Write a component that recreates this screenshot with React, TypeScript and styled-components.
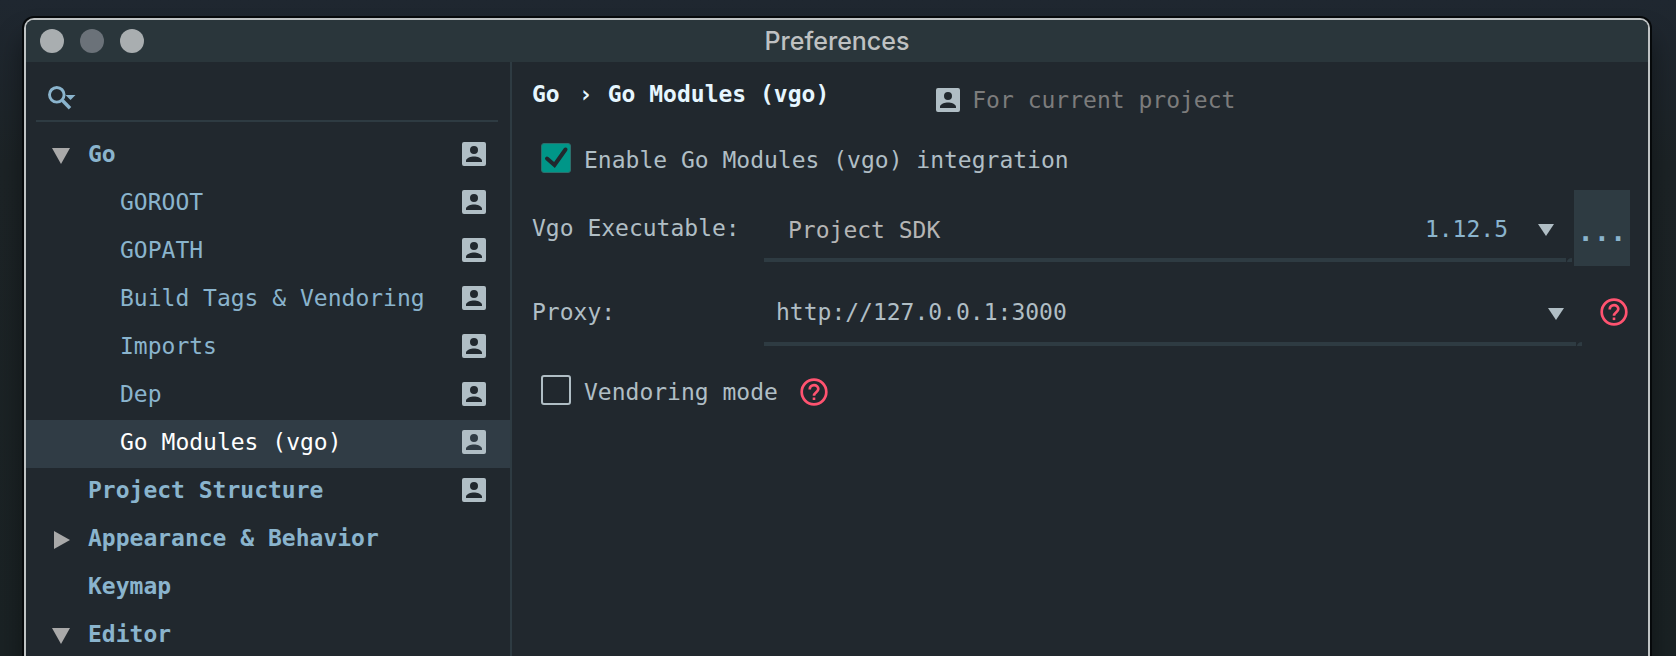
import React, { useState } from "react";
import styled, { createGlobalStyle } from "styled-components";

const c = {
  bg: "#21282e",
  title: "#2a363b",
  line: "#2e3b42",
  selected: "#303c45",
  text: "#b0bec5",
  blue: "#8ab4cd",
  grey: "#a9a9a9",
  teal: "#009688",
  pink: "#ff5370",
};

const Global = createGlobalStyle`
  * { box-sizing: border-box; }
  body {
    margin: 0;
    font: 23px/28px "DejaVu Sans Mono", "Liberation Mono", monospace;
    color: ${c.text};
    background: #1b2326;
  }
  button, input, select { font: inherit; color: inherit; }
`;

const Desktop = styled.div`
  height: 100vh;
  overflow: hidden;
  display: flex;
  padding: 18px 26px 0 24px;
  background: linear-gradient(#1f2730, #1c2326 25%, #1a2224);
`;

const Window = styled.section`
  flex: 1;
  min-width: 0;
  display: flex;
  flex-direction: column;
  border: 2px solid #bfc3c4;
  border-bottom: 0;
  border-radius: 10px 10px 0 0;
  background: ${c.bg};
  box-shadow: 0 0 0 2px #06090b, 0 20px 26px 2px rgba(0, 0, 0, 0.4);
  overflow: hidden;
`;

const TitleBar = styled.header`
  flex: none;
  display: grid;
  grid-template-columns: 1fr auto 1fr;
  align-items: center;
  height: 42px;
  padding: 0 14px;
  background: ${c.title};
`;

const Lights = styled.div`
  display: flex;
  gap: 16px;
`;

const Light = styled.button<{ $dim?: boolean }>`
  width: 24px;
  height: 24px;
  padding: 0;
  border: 0;
  border-radius: 50%;
  background: ${(p) => (p.$dim ? "#6b7279" : "#a9aeb0")};
`;

const Title = styled.h1`
  margin: 0;
  font: 500 25px/40px Inter, "Liberation Sans", sans-serif;
  color: #bfc1c2;
`;

const Body = styled.div`
  flex: 1;
  min-height: 0;
  display: grid;
  grid-template-columns: 486px minmax(0, 1fr);
`;

const Sidebar = styled.aside`
  border-right: 2px solid ${c.line};
`;

const SearchBox = styled.label`
  display: flex;
  align-items: center;
  gap: 8px;
  height: 60px;
  margin: 0 12px 10px 10px;
  padding: 14px 12px 0;
  border-bottom: 2px solid ${c.line};
`;

const SearchInput = styled.input`
  flex: 1;
  min-width: 0;
  border: 0;
  outline: 0;
  background: transparent;
`;

const Tree = styled.ul`
  margin: 0;
  padding: 0;
  list-style: none;
`;

const TreeRow = styled.li<{ $selected?: boolean; $bold?: boolean }>`
  display: flex;
  align-items: center;
  height: 48px;
  padding: 0 24px 4px 26px;
  font-weight: ${(p) => (p.$bold ? 700 : 400)};
  color: ${(p) => (p.$selected ? "#ffffff" : c.blue)};
  background: ${(p) => (p.$selected ? c.selected : "transparent")};
`;

const Twisty = styled.span<{ $child?: boolean }>`
  flex: none;
  display: flex;
  width: ${(p) => (p.$child ? 68 : 36)}px;
  padding-top: 4px;
`;

const RowLabel = styled.span`
  flex: 1;
  white-space: nowrap;
`;

const Main = styled.main`
  padding: 18px 18px 0 20px;
`;

const Heading = styled.div`
  display: flex;
  align-items: flex-start;
  gap: 107px;
  height: 64px;
`;

const Crumbs = styled.h2`
  display: flex;
  margin: 0;
  font-size: 23px;
  line-height: 28px;
  color: #e6f6ff;
  white-space: pre;
`;

const Separator = styled.span`
  width: 48px;
  padding-left: 4px;
  text-align: center;
`;

const Scope = styled.div`
  display: flex;
  align-items: center;
  gap: 12px;
  padding-top: 6px;
  color: #7c7c7c;
`;

const CheckRow = styled.div`
  display: flex;
  align-items: center;
  gap: 22px;
  height: 32px;
  padding-left: 9px;
`;

const CheckLabel = styled.label`
  display: flex;
  align-items: center;
  gap: 13px;
`;

const BoxCell = styled.span`
  display: grid;
  padding-bottom: 4px;
  > * { grid-area: 1 / 1; }
  > svg { pointer-events: none; }
`;

const CheckBox = styled.input`
  appearance: none;
  width: 30px;
  height: 30px;
  margin: 0;
  border: 2px solid ${c.text};
  border-radius: 3px;
  &:checked {
    border: 1px solid #2c6f6c;
    background: ${c.teal};
  }
`;

const Form = styled.div`
  display: grid;
  grid-template-columns: 232px minmax(0, 1fr);
  margin: 14px 0 18px;
  align-items: start;
`;

const FieldLabel = styled.label`
  padding-top: 24px;
`;

const Field = styled.div<{ $gap: number }>`
  display: flex;
  align-items: flex-start;
  gap: ${(p) => p.$gap}px;
  height: 84px;
`;

const Combo = styled.div`
  flex: 1;
  min-width: 0;
`;

const ComboBody = styled.div`
  display: grid;
  grid-template-columns: minmax(0, 1fr) auto auto;
  align-items: center;
  column-gap: 30px;
  height: 68px;
  padding: 12px 18px 0 0;
`;

const Select = styled.select`
  grid-area: 1 / 1 / 2 / -1;
  appearance: none;
  height: 40px;
  padding: 0 0 0 24px;
  border: 0;
  outline: 0;
  background: transparent;
  color: #b5b5b5;
`;

const Version = styled.span`
  grid-area: 1 / 2;
  padding-bottom: 2px;
  color: ${c.blue};
  pointer-events: none;
`;

const SelectArrow = styled.span`
  grid-area: 1 / 3;
  display: flex;
  pointer-events: none;
`;

const TextInput = styled.input`
  grid-area: 1 / 1 / 2 / 3;
  min-width: 0;
  height: 40px;
  padding: 0 0 4px 12px;
  border: 0;
  outline: 0;
  background: transparent;
`;

const PlainButton = styled.button`
  display: flex;
  padding: 0;
  border: 0;
  background: transparent;
`;

const Underline = styled.div`
  display: flex;
  height: 4px;
  &::before {
    content: "";
    flex: 1;
    background: ${c.line};
  }
`;

const MoreButton = styled.button`
  width: 56px;
  height: 76px;
  padding: 8px 0 0;
  border: 0;
  background: ${c.line};
  color: ${c.blue};
  font-size: 27px;
  font-weight: 700;
  text-align: center;
`;

const HelpCell = styled.div`
  padding: 24px 2px 0 0;
`;

const Person = () => (
  <svg width="24" height="24" viewBox="0 0 24 24" aria-hidden="true">
    <path
      fill={c.text}
      fillRule="evenodd"
      d="M2 0h20a2 2 0 0 1 2 2v20a2 2 0 0 1-2 2H2a2 2 0 0 1-2-2V2a2 2 0 0 1 2-2ZM12 4a4 4 0 1 0 0 8 4 4 0 0 0 0-8ZM4 20h16v-1.300c0-2.700-5-4.200-8-4.200s-8 1.500-8 4.200Z"
    />
  </svg>
);

const Caret = ({ open }: { open: boolean }) => (
  <svg width="20" height="18" viewBox="0 0 20 18" aria-hidden="true">
    <path fill={c.grey} d={open ? "M0 1h18L9 17Z" : "M2 0v18l16-9Z"} />
  </svg>
);

const DropArrow = () => (
  <svg width="16" height="12" viewBox="0 0 16 12" aria-hidden="true">
    <path fill={c.text} d="M0 0h16L8 12Z" />
  </svg>
);

const Notch = () => (
  <svg width="6" height="4" viewBox="0 0 6 4" aria-hidden="true">
    <path fill={c.line} d="M6 0v4H1C1 2 3 0 6 0Z" />
  </svg>
);

const SearchIcon = () => (
  <svg width="30" height="24" viewBox="0 0 30 24" fill="none" aria-hidden="true">
    <circle cx="8.800" cy="8.800" r="7.300" stroke={c.blue} strokeWidth="2.900" />
    <path d="M14.500 14.500 22 22.300" stroke={c.blue} strokeWidth="3.400" />
    <path d="M17.500 9h10L22.500 14Z" fill={c.blue} />
  </svg>
);

const Help = () => (
  <svg width="28" height="28" viewBox="0 0 28 28" fill="none" aria-hidden="true">
    <circle cx="14" cy="14" r="12.300" stroke={c.pink} strokeWidth="2.700" />
    <path d="M9.700 11.400c0-2.500 1.900-4.300 4.300-4.300s4.300 1.700 4.300 4c0 3-4.300 3.400-4.300 6.700" stroke={c.pink} strokeWidth="2.700" />
    <path d="M12.700 19.500h2.600v2.600h-2.600z" fill={c.pink} />
  </svg>
);

type Item = { label: string; level: 0 | 1; project?: boolean; open?: boolean; selected?: boolean };

const items: Item[] = [
  { label: "Go", level: 0, project: true, open: true },
  { label: "GOROOT", level: 1, project: true },
  { label: "GOPATH", level: 1, project: true },
  { label: "Build Tags & Vendoring", level: 1, project: true },
  { label: "Imports", level: 1, project: true },
  { label: "Dep", level: 1, project: true },
  { label: "Go Modules (vgo)", level: 1, project: true, selected: true },
  { label: "Project Structure", level: 0, project: true },
  { label: "Appearance & Behavior", level: 0, open: false },
  { label: "Keymap", level: 0 },
  { label: "Editor", level: 0, open: true },
];

export default function App() {
  const [enabled, setEnabled] = useState(true);
  const [vendoring, setVendoring] = useState(false);
  const [proxy, setProxy] = useState("http://127.0.0.1:3000");

  return (
    <Desktop>
      <Global />
      <Window>
        <TitleBar>
          <Lights>
            <Light aria-label="Close" />
            <Light $dim aria-label="Minimize" />
            <Light aria-label="Zoom" />
          </Lights>
          <Title>Preferences</Title>
        </TitleBar>
        <Body>
          <Sidebar>
            <SearchBox>
              <SearchIcon />
              <SearchInput type="search" aria-label="Search settings" />
            </SearchBox>
            <Tree>
              {items.map((item) => (
                <TreeRow key={item.label} $bold={item.level === 0} $selected={item.selected}>
                  <Twisty $child={item.level === 1}>
                    {item.open !== undefined && <Caret open={item.open} />}
                  </Twisty>
                  <RowLabel>{item.label}</RowLabel>
                  {item.project && <Person />}
                </TreeRow>
              ))}
            </Tree>
          </Sidebar>
          <Main>
            <Heading>
              <Crumbs>
                <span>Go</span>
                <Separator>›</Separator>
                <span>Go Modules (vgo)</span>
              </Crumbs>
              <Scope>
                <Person />
                <span>For current project</span>
              </Scope>
            </Heading>
            <CheckRow>
              <CheckLabel>
                <BoxCell>
                  <CheckBox type="checkbox" checked={enabled} onChange={(e) => setEnabled(e.target.checked)} />
                  {enabled && (
                    <svg width="30" height="30" viewBox="0 0 30 30" fill="none" aria-hidden="true">
                      <path d="M6 15.500 13.500 22 24.500 6.500" stroke={c.bg} strokeWidth="4" strokeLinecap="round" />
                    </svg>
                  )}
                </BoxCell>
                Enable Go Modules (vgo) integration
              </CheckLabel>
            </CheckRow>
            <Form>
              <FieldLabel htmlFor="vgo">Vgo Executable:</FieldLabel>
              <Field $gap={2}>
                <Combo>
                  <ComboBody>
                    <Select id="vgo">
                      <option>Project SDK</option>
                    </Select>
                    <Version>1.12.5</Version>
                    <SelectArrow>
                      <DropArrow />
                    </SelectArrow>
                  </ComboBody>
                  <Underline>
                    <Notch />
                  </Underline>
                </Combo>
                <MoreButton aria-label="Browse">...</MoreButton>
              </Field>
              <FieldLabel htmlFor="proxy">Proxy:</FieldLabel>
              <Field $gap={18}>
                <Combo>
                  <ComboBody>
                    <TextInput id="proxy" value={proxy} onChange={(e) => setProxy(e.target.value)} />
                    <PlainButton aria-label="Show proxies">
                      <DropArrow />
                    </PlainButton>
                  </ComboBody>
                  <Underline>
                    <Notch />
                  </Underline>
                </Combo>
                <HelpCell>
                  <PlainButton aria-label="Proxy help">
                    <Help />
                  </PlainButton>
                </HelpCell>
              </Field>
            </Form>
            <CheckRow>
              <CheckLabel>
                <BoxCell>
                  <CheckBox type="checkbox" checked={vendoring} onChange={(e) => setVendoring(e.target.checked)} />
                </BoxCell>
                Vendoring mode
              </CheckLabel>
              <PlainButton aria-label="Vendoring help">
                <Help />
              </PlainButton>
            </CheckRow>
          </Main>
        </Body>
      </Window>
    </Desktop>
  );
}
